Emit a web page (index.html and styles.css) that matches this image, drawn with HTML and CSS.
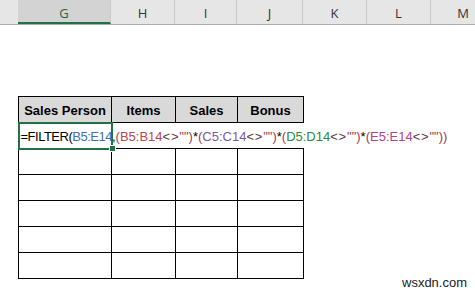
FILE: index.html
```html
<!DOCTYPE html>
<html lang="en">
<head>
    <meta charset="UTF-8">
    <title>Filter Formula</title>
    <link rel="stylesheet" href="styles.css">
</head>
<body>
    <div class="col-bar">
        <div class="col-head corner"></div>
        <div class="col-head col-g selected">G</div>
        <div class="col-head col-h">H</div>
        <div class="col-head col-i">I</div>
        <div class="col-head col-j">J</div>
        <div class="col-head col-k">K</div>
        <div class="col-head col-l">L</div>
        <div class="col-head col-m">M</div>
    </div>

    <div class="sheet">
        <table class="data">
            <colgroup>
                <col class="w-g">
                <col class="w-h">
                <col class="w-i">
                <col class="w-j">
            </colgroup>
            <tr class="head-row">
                <th>Sales Person</th>
                <th>Items</th>
                <th>Sales</th>
                <th>Bonus</th>
            </tr>
            <tr class="formula-row">
                <td class="active">
                    <span class="formula"><span class="lead">=FILTER(<span class="ref-blue">B5:E14</span></span>,<span class="paren">(</span><span class="ref-red">B5:B14</span><span class="op">&lt;&gt;</span><span class="paren">"")</span>*<span class="paren">(</span><span class="ref-purple">C5:C14</span><span class="op">&lt;&gt;</span><span class="paren">"")</span>*<span class="paren">(</span><span class="ref-green">D5:D14</span><span class="op">&lt;&gt;</span><span class="paren">"")</span>*<span class="paren">(</span><span class="ref-pink">E5:E14</span><span class="op">&lt;&gt;</span><span class="paren">""))</span></span>
                    <span class="fill-handle"></span>
                </td>
                <td></td>
                <td></td>
                <td></td>
            </tr>
            <tr><td></td><td></td><td></td><td></td></tr>
            <tr><td></td><td></td><td></td><td></td></tr>
            <tr><td></td><td></td><td></td><td></td></tr>
            <tr><td></td><td></td><td></td><td></td></tr>
            <tr><td></td><td></td><td></td><td></td></tr>
        </table>
    </div>

    <div class="watermark">wsxdn.com</div>
</body>
</html>
```

FILE: styles.css
```css
/* Spreadsheet view */
body {
    margin: 0;
    padding: 0;
    background-color: #fff;
    font-family: 'Liberation Sans', Arial, sans-serif;
    color: #000;
    position: relative;
    width: 475px;
    height: 292px;
    overflow: hidden;
}

/* Column letters bar */
.col-bar {
    display: flex;
    height: 24px;
    background-color: #e6e6e6;
    border-bottom: 1px solid #ababab;
}
.col-head {
    flex: none;
    height: 24px;
    box-sizing: border-box;
    border-right: 1px solid #c9c9c9;
    font-family: 'Open Sans', sans-serif;
    font-size: 13px;
    line-height: 26px;
    text-align: center;
    color: #333;
}
.corner { width: 18px; border-right: none; }
.col-g { width: 93px; }
.col-h { width: 64px; }
.col-i { width: 62px; }
.col-j { width: 66px; }
.col-k { width: 64px; }
.col-l { width: 64px; }
.col-m { width: 64px; border-right: none; }
.col-head.selected {
    background-color: #d3d3d3;
    border-bottom: 2px solid #217346; /* Excel green */
    color: #2d5e3e;
}

/* Table on the sheet */
.sheet {
    padding: 71px 0 0 18px;
}
.data {
    border-collapse: collapse;
    table-layout: fixed;
    width: 285px;
}
.w-g { width: 93px; }
.w-h { width: 64px; }
.w-i { width: 62px; }
.w-j { width: 66px; }
.data tr {
    height: 26px;
}
.data th,
.data td {
    border: 1px solid #000;
    height: 24px;
    padding: 0;
    box-sizing: border-box;
}
.data th {
    background-color: #d9d9d9;
    font-size: 13px;
    font-weight: bold;
    text-align: center;
    vertical-align: bottom;
    padding-bottom: 4px;
}

/* Row being edited */
.formula-row td {
    border-left: none;
    border-right: none;
}
.formula-row td.active {
    position: relative;
    outline: 2px solid #217346;
    outline-offset: -1px;
    overflow: visible;
    white-space: nowrap;
    vertical-align: bottom;
    padding: 0 0 4px 2px;
    line-height: 15px;
}
.formula {
    position: relative;
    z-index: 1; /* text sits over the cell outline */
    font-size: 13px;
    color: #000;
}
.formula .lead { letter-spacing: -0.5px; }
.ref-blue { color: #3f6fb6; }
.ref-red { color: #c0444a; }
.ref-purple { color: #7a58a8; }
.ref-green { color: #2e8a3e; }
.ref-pink { color: #b04488; }
.paren { color: #a33a52; }
.op { color: #5a3a45; letter-spacing: 0.8px; }
.fill-handle {
    position: absolute;
    right: -4px;
    bottom: -4px;
    width: 5px;
    height: 5px;
    background-color: #217346;
    border: 1px solid #fff;
}

.watermark {
    position: absolute;
    left: 402px;
    top: 275px;
    font-size: 13px;
    line-height: 15px;
    color: #222;
}
```
